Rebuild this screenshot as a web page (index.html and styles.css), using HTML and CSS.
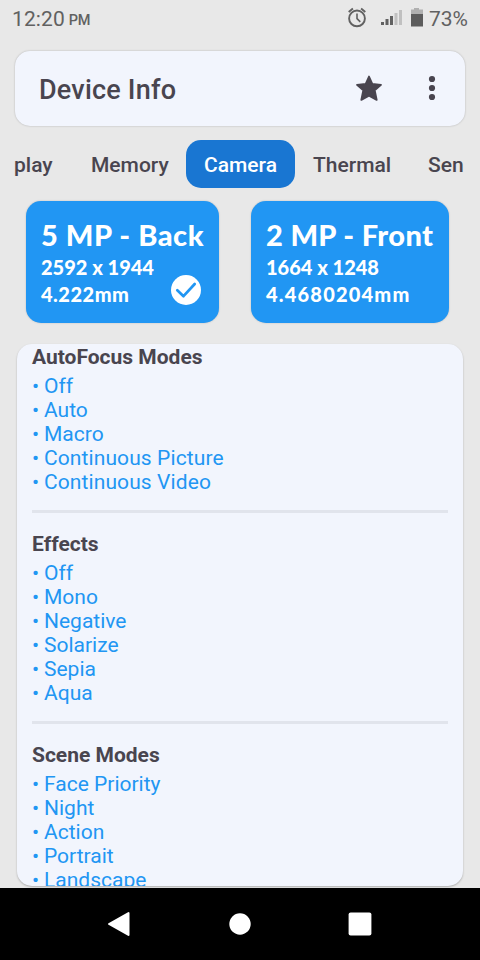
FILE: index.html
```html
<!DOCTYPE html>
<html lang="en">
<head>
<meta charset="utf-8">
<title>Device Info</title>
<link rel="stylesheet" href="styles.css">
</head>
<body>
<div class="screen">
  <div class="status">
    <span class="time">12:20</span><span class="ampm">PM</span>
    <svg class="status-icons" width="80" height="24" viewBox="0 0 80 24">
      <g fill="none" stroke="#616161" stroke-width="1.9">
        <circle cx="14" cy="13.4" r="7.900"/>
        <path d="M14 8.600v5l3.300 3.300" stroke-width="1.600"/>
        <path d="M5.700 6.900l4.200-3.400M22.300 6.900l-4.200-3.400"/>
      </g>
      <path fill="#616161" d="M38 17h3v3h-3zM42.500 14h3v6h-3zM47 11h3v9h-3z"/>
      <path fill="#c0c0c0" d="M51.500 8h3v12h-3zM56 5h3v15h-3z"/>
      <path fill="#b0b0b0" d="M71 3h5v1.500h4V9H68V4.500h3z"/>
      <path fill="#5c5c5c" d="M68 9h12v12.500H68z"/>
    </svg>
    <span class="battery">73%</span>
  </div>
  <header class="header">
    <h1>Device Info</h1>
    <svg class="star" width="28" height="28" viewBox="0 0 28 28"><path d="M14 2.500l3.300 7.400 8.700.9-6.300 5.500 2 9.600-7.700-4.300-7.700 4.300 2-9.600L2 10.800l8.700-.9z" fill="#49454f" stroke="#49454f" stroke-width="1.800" stroke-linejoin="round"/></svg>
    <svg class="more" width="8" height="28" viewBox="0 0 8 28" fill="#49454f"><circle cx="4" cy="5" r="3.100"/><circle cx="4" cy="14" r="3.100"/><circle cx="4" cy="23" r="3.100"/></svg>
  </header>
  <nav class="tabs">
    <span class="tab first">play</span><span class="tab memory">Memory</span><span class="tab active">Camera</span><span class="tab thermal">Thermal</span><span class="tab last">Sen</span>
  </nav>
  <div class="cameras">
    <div class="camera back">
      <h2>5 MP - Back</h2><p class="res">2592 x 1944</p><p class="focal">4.222mm</p>
      <svg class="check" width="30" height="30" viewBox="0 0 30 30"><circle cx="15" cy="15" r="15" fill="#fff"/><path d="M6.300 15.200l6.200 6L23.700 9" fill="none" stroke="#2196f3" stroke-width="2.700" stroke-linecap="round" stroke-linejoin="round"/></svg>
    </div>
    <div class="camera front">
      <h2>2 MP - Front</h2><p class="res">1664 x 1248</p><p class="focal">4.4680204mm</p>
    </div>
  </div>
  <main class="panel">
    <section>
      <h3>AutoFocus Modes</h3>
      <ul><li>Off</li><li>Auto</li><li>Macro</li><li class="wide">Continuous Picture</li><li class="wide">Continuous Video</li></ul>
    </section>
    <section>
      <h3>Effects</h3>
      <ul><li>Off</li><li>Mono</li><li>Negative</li><li>Solarize</li><li>Sepia</li><li>Aqua</li></ul>
    </section>
    <section>
      <h3>Scene Modes</h3>
      <ul><li>Face Priority</li><li>Night</li><li>Action</li><li>Portrait</li><li>Landscape</li></ul>
    </section>
  </main>
  <footer class="navbar">
    <svg class="nav-back" width="24" height="26" viewBox="0 0 24 26"><path d="M2 13L21.500 2v22z" fill="#fff" stroke="#fff" stroke-width="2" stroke-linejoin="round"/></svg>
    <svg width="22" height="22" viewBox="0 0 22 22"><circle cx="11" cy="11" r="10.700" fill="#fff"/></svg>
    <svg width="24" height="24" viewBox="0 0 24 24"><rect x=".6" y=".5" width="22.800" height="23" rx="2" fill="#fff"/></svg>
  </footer>
</div>
</body>
</html>
```
FILE: styles.css
```css
* { box-sizing: border-box; }
body, h1, h2, h3, p, ul { margin: 0; padding: 0; }
body { background: #e8e8e8; font-family: Roboto, "Liberation Sans", sans-serif; color: #49454f; }
.screen { width: 480px; height: 960px; overflow: hidden; display: flex; flex-direction: column; white-space: nowrap; }
.status { height: 51px; flex: none; display: flex; align-items: flex-start; padding: 7px 12px 0; color: #616161; line-height: 24px; }
.time { font-size: 21px; letter-spacing: .1px; }
.ampm { font-size: 14.500px; font-weight: 500; margin-left: 4px; line-height: 28px; letter-spacing: -.2px; }
.status-icons { margin: -2px 0 0 auto; }
.battery { font-size: 21px; width: 39px; margin-left: 6px; }
.header { height: 75px; flex: none; margin: 0 15px; padding: 1px 29px 0 24px; display: flex; align-items: center; background: #f2f5fd; border-radius: 15px; box-shadow: 0 0 2px rgba(0,0,0,.25); }
h1 { font-size: 27px; font-weight: 500; flex: 1; line-height: 32px; padding-top: 2px; letter-spacing: .2px; }
.star { margin: -2px 45px 0 0; }
.more { margin-top: -3px; }
.tabs { height: 48px; flex: none; margin-top: 14px; padding: 0 14px; display: flex; font-size: 21px; font-weight: 500; line-height: 50px; }
.first { width: 77px; }
.memory { width: 95px; }
.active { width: 109px; text-align: center; border-radius: 15px; background: #1976d2; color: #fff; }
.thermal { width: 133px; padding-left: 18px; }
.cameras { display: flex; gap: 32px; margin: 13px 0 0 26px; flex: none; }
.camera { position: relative; height: 122px; background: #2196f3; border-radius: 15px; color: #fff; padding: 15px 15px 0; font-family: Lato, sans-serif; font-weight: 900; box-shadow: 0 0 2px rgba(0,0,0,.2); }
.back { width: 193px; }
.front { width: 198px; }
h2 { font-size: 29px; line-height: 38px; font-weight: 900; letter-spacing: .55px; }
.front h2 { letter-spacing: .35px; }
.camera p { font-size: 20px; line-height: 27px; }
.camera .focal { letter-spacing: .5px; }
.front .focal { letter-spacing: 1.200px; }
.check { position: absolute; left: 145px; top: 74px; }
.panel { height: 542px; flex: none; margin: 21px 17px 0; padding: 0 15px; overflow: hidden; border-radius: 15px; background: #f2f5fd; box-shadow: 0 1px 2px rgba(0,0,0,.25); }
section { padding-top: 19px; }
section:first-child { padding-top: 1px; }
section:not(:last-child) { border-bottom: 3px solid #e1e4ec; padding-bottom: 16px; }
h3 { font-size: 21px; line-height: 25px; font-weight: 700; padding-bottom: 4px; }
ul { list-style: none; color: #2196f3; font-size: 21px; line-height: 24px; }
li::before { content: "•"; display: inline-block; width: 12px; letter-spacing: 0; }
.wide { letter-spacing: .1px; }
.navbar { height: 72px; flex: none; margin-top: 2px; background: #000; display: grid; grid-template-columns: 120px 120px 120px; justify-content: center; place-items: center; }
.nav-back { margin-right: 3px; }
```
